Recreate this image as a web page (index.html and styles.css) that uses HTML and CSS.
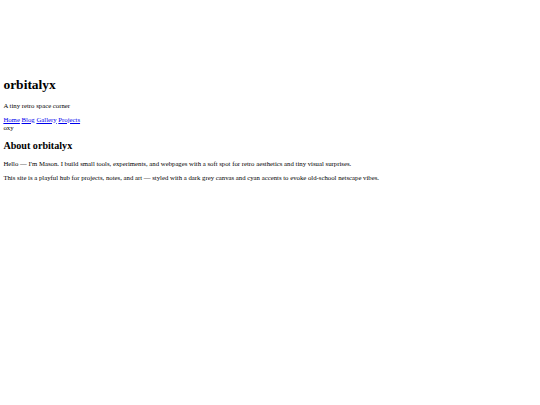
FILE: index.html
```html
<!DOCTYPE html>
<html>
<head>
<meta charset="utf-8">
<link rel="stylesheet" href="styles.css">
</head>
<body>
<header class="site-header">
<h1 class="title">orbitalyx</h1>
<p class="tagline">A tiny retro space corner</p>
<nav class="nav"><a href="#">Home</a> <a href="#">Blog</a> <a href="#">Gallery</a> <a href="#">Projects</a></nav>
<div class="oxy">oxy</div>
</header>
<main>
<h2 class="section-title">About orbitalyx</h2>
<p class="text">Hello — I'm Mason. I build small tools, experiments, and webpages with a soft spot for retro aesthetics and tiny visual surprises.</p>
<p class="text">This site is a playful hub for projects, notes, and art — styled with a dark grey canvas and cyan accents to evoke old-school netscape vibes.</p>
</main>
</body>
</html>
```
FILE: styles.css
```css
html { background: #fff; }
body {
  margin: 3.375px;
  font-family: "Liberation Serif", "Times New Roman", serif;
  font-size: 6.75px;
  color: #000;
}
.site-header { padding-top: 64.3px; padding-bottom: 1.5px; }
.title { font-size: 13.5px; margin: 9.05px 0; font-weight: bold; }
.tagline { margin: 6.75px 0; }
.nav a { color: #0000ee; }
.oxy { padding-top: 1px; }
.section-title { font-size: 10.125px; margin: 8.4px 0; font-weight: bold; }
.text { margin: 6.75px 0; }
```
